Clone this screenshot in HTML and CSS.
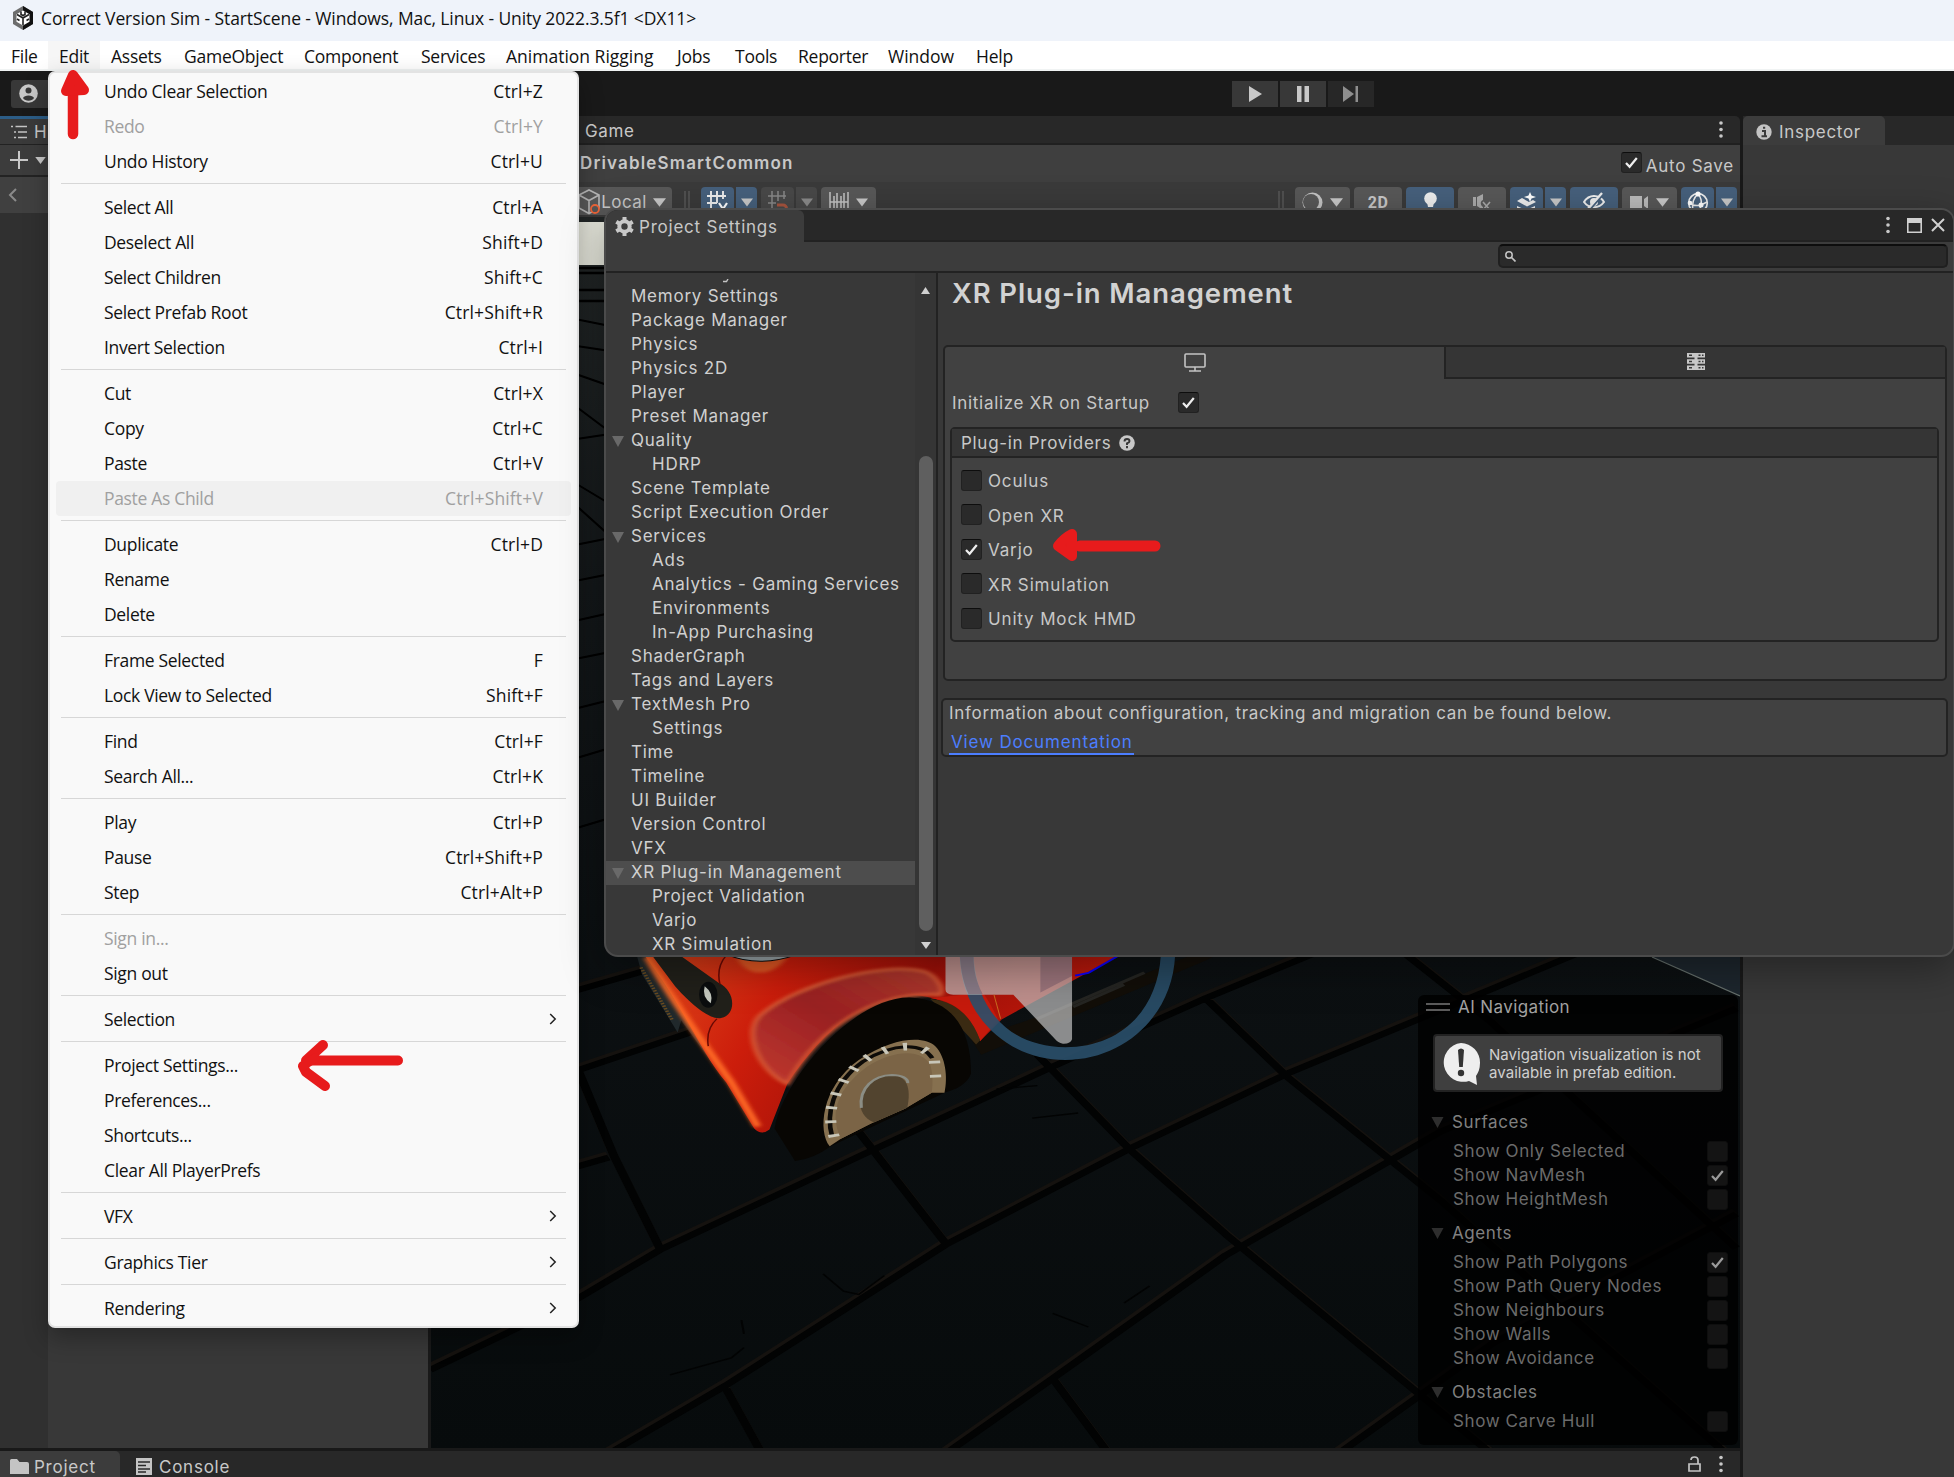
FILE: index.html
```html
<!DOCTYPE html>
<html lang="en">
<head>
<meta charset="utf-8">
<title>Correct Version Sim - StartScene</title>
<link rel="stylesheet" href="styles.css">
</head>
<body>
<svg width="0" height="0" class="defs">
  <symbol id="check" viewBox="0 0 21 21"><path d="M5 11l3.6 3.8L15.8 6" fill="none" stroke="currentColor" stroke-width="2.2"/></symbol>
  <symbol id="tri" viewBox="0 0 12 12"><path d="M0 1h12L6 12z" fill="currentColor"/></symbol>
  <symbol id="drop" viewBox="0 0 12 8"><path d="M0 0h12L6 8z" fill="currentColor"/></symbol>
  <symbol id="kebab" viewBox="0 0 4 18"><circle cx="2" cy="2.5" r="1.8"/><circle cx="2" cy="9" r="1.8"/><circle cx="2" cy="15.5" r="1.8"/></symbol>
  <symbol id="chev" viewBox="0 0 8 12"><path d="M1.2 1l5 5-5 5" fill="none" stroke="#222" stroke-width="1.5"/></symbol>
</svg>

<header class="titlebar">
  <svg class="logo" width="22" height="24" viewBox="0 0 22 24"><path d="M11 0l10 6v12l-10 6L1 18V6z" fill="#6d6d6d"/><path d="M11 0l10 6v12l-10 6z" fill="#111"/><path d="M11 4.500l6.500 3.800v7.400L11 19.500l-6.500-3.800V8.300z" fill="#fff"/><path d="M11 12v7M11 12L5 8.500M11 12l6-3.500M9 5.500v3l2 1 2-1v-3M5 13l2.500 1.500M17 13l-2.500 1.500" stroke="#222" stroke-width="1.600" fill="none"/></svg>
  <span>Correct Version Sim - StartScene - Windows, Mac, Linux - Unity 2022.3.5f1 &lt;DX11&gt;</span>
</header>
<nav class="menubar">
  <span style="width:48px">File</span><span class="open" style="width:52px">Edit</span><span style="width:73px">Assets</span><span style="width:120px">GameObject</span><span style="width:117px">Component</span><span style="width:85px">Services</span><span style="width:171px">Animation Rigging</span><span style="width:58px">Jobs</span><span style="width:63px">Tools</span><span style="width:90px">Reporter</span><span style="width:88px">Window</span><span style="width:60px">Help</span>
</nav>
<div class="maintools">
  <div class="account"><svg width="19" height="19" viewBox="0 0 19 19"><circle cx="9.500" cy="9.500" r="9.300" fill="#c8c8c8"/><circle cx="9.500" cy="6.500" r="3" fill="#383838"/><path d="M4 14c1-3.500 10-3.500 11 0-2 3.500-9 3.500-11 0z" fill="#383838"/></svg></div>
  <div class="playgroup">
    <div class="pb"><svg width="13" height="16"><path d="M0 0l13 8-13 8z" fill="#c8c8c8"/></svg></div>
    <div class="pb"><svg width="12" height="16"><path d="M0 0h4.500v16H0zM7.500 0H12v16H7.500z" fill="#c8c8c8"/></svg></div>
    <div class="pb off"><svg width="16" height="16"><path d="M0 0l11 8-11 8zM12.500 0H15v16h-2.500z" fill="#8e8e8e"/></svg></div>
  </div>
</div>

<div class="workspace">
  <div class="leftpart">
    <div class="panels">
      <section class="hier">
        <div class="hiertab"><svg width="17" height="14" viewBox="0 0 17 14"><path d="M0 1.500h2M4.500 1.500H16M3 7h2M7 7h9M3 12.500h2M7 12.500h9" stroke="#c4c4c4" stroke-width="1.700"/></svg><span>H</span></div>
        <div class="hiertools"><svg width="18" height="18"><path d="M9 0v18M0 9h18" stroke="#c8c8c8" stroke-width="2"/></svg><svg width="11" height="7" class="lt"><use href="#drop"/></svg></div>
        <div class="hierback"><svg width="9" height="14"><path d="M8 1L2 7l6 6" fill="none" stroke="#8a8a8a" stroke-width="2"/></svg></div>
        <div class="hierbody"><div class="gutter"></div><div class="tree"></div></div>
      </section>
      <section class="scene">
        <div class="scenetab"><span>Game</span><svg width="4" height="19" class="lt"><use href="#kebab"/></svg></div>
        <div class="scenehead"><b>DrivableSmartCommon</b><div class="autosave"><i class="cb"><svg width="21" height="21"><use href="#check"/></svg></i><span>Auto Save</span></div></div>
        <div class="scenetools">
          <div class="tb local"><svg width="22" height="26" viewBox="0 0 22 26"><path d="M1 6l10-5 10 5v13l-10 5.500L1 19zM1 6l10 5.500L21 6M11 11.500V24" fill="none" stroke="#b8b8b8" stroke-width="1.600"/><circle cx="17" cy="20" r="4" fill="#585858" stroke="#f2673a" stroke-width="1.800"/></svg><span>Local</span><svg width="13" height="9"><use href="#drop"/></svg></div>
          <div class="grip"></div>
          <div class="tb on w33"><svg width="22" height="22" viewBox="0 0 22 22"><path d="M0 5h19M0 12h10M0 19h9M4 0v22M10 0v12M16 0v8" stroke="#eee" stroke-width="1.900" fill="none"/><path d="M12 12l4 6 4-6M16 18v4" stroke="#fff" stroke-width="2.200" fill="none"/></svg></div><div class="tb on w21 j"><svg width="12" height="9"><use href="#drop"/></svg></div>
          <div class="tb dim w33"><svg width="20" height="22" viewBox="0 0 20 22"><path d="M0 5h18M0 12h8M0 19h6M4 0v22M10 0v10M16 0v8" stroke="#888" stroke-width="1.500" fill="none"/><path d="M9 14h6a3.500 3.500 0 010 7H9" stroke="#a8553f" stroke-width="3" fill="none"/></svg></div><div class="tb dim w21 j"><svg width="12" height="9"><use href="#drop"/></svg></div>
          <div class="tb w55"><svg width="20" height="20"><path d="M1 0v20M19 0v20M5 4v12M8 1v18M12 4v12M15 1v18M1 10h18" stroke="#c4c4c4" stroke-width="1.500"/></svg><svg width="12" height="9"><use href="#drop"/></svg></div>
          <div class="grip r"></div>
          <div class="tb w55"><svg width="21" height="21"><circle cx="10.500" cy="10.500" r="10" fill="#c4c4c4"/><circle cx="9" cy="10" r="8" fill="#585858"/></svg><svg width="13" height="9"><use href="#drop"/></svg></div>
          <div class="tb w48"><b class="two">2D</b></div>
          <div class="tb on w48"><svg width="13" height="21" viewBox="0 0 13 21"><circle cx="6.500" cy="6.500" r="6.300" fill="#eee"/><path d="M3 10h7l-1 5H4zM4 16h5v3H4z" fill="#eee"/></svg></div>
          <div class="tb w48"><svg width="18" height="17"><path d="M0 3h3v9H0zM4 3l6-3v6c-3 1-3 5 0 7v3l-6-4z" fill="#aaa"/><path d="M10 8l7 8M17 8l-7 8" stroke="#aaa" stroke-width="1.600"/></svg></div>
          <div class="tb on w33"><svg width="20" height="20" viewBox="0 0 20 20"><path d="M0 9l5-3 7 4 4-2 3 2-9 4.500zM0 14l9 4 9-4v2l-9 4-9-4z" fill="#eee"/><path d="M13 0l1.500 3.500L19 5l-4.500 1.500L13 10l-1.500-3.500L7 5l4.500-1.500z" fill="#fff"/></svg></div><div class="tb on w21 j"><svg width="12" height="9"><use href="#drop"/></svg></div>
          <div class="tb on w48"><svg width="22" height="20" viewBox="0 0 22 20"><path d="M1 10c5-8 15-8 20 0-5 7-15 7-20 0z" fill="none" stroke="#eee" stroke-width="2"/><circle cx="11" cy="10" r="4" fill="#eee"/><path d="M20.500 2L5.500 19" stroke="#46607c" stroke-width="2"/><path d="M19 1L4 18" stroke="#eee" stroke-width="2.300"/></svg></div>
          <div class="tb w55"><svg width="19" height="13"><path d="M0 0h12v13H0zM14 3l4-3v13l-4-3z" fill="#bbb"/></svg><svg width="13" height="9"><use href="#drop"/></svg></div>
          <div class="tb on w33"><svg width="22" height="23" viewBox="0 0 22 23"><circle cx="11" cy="12" r="9.300" fill="none" stroke="#eee" stroke-width="1.700"/><path d="M11 3C6 7 5 14 6 20M11 3c3 3 4 8 3 11M2 12c4 3 8 3 12 2l6-3M14 14l-2 7" fill="none" stroke="#eee" stroke-width="1.500"/><circle cx="11" cy="3" r="2.600" fill="#fff"/><circle cx="3" cy="12" r="2.300" fill="#fff"/><circle cx="14" cy="14" r="2.500" fill="#fff"/></svg></div><div class="tb on w21 j last"><svg width="12" height="9"><use href="#drop"/></svg></div>
        </div>
        <div class="view">
          <svg class="render" width="1309" height="1231" viewBox="431 217 1309 1231">
            <defs>
              <linearGradient id="road" x1="0" y1="0" x2="0" y2="1"><stop offset="0" stop-color="#232727"/><stop offset=".3" stop-color="#14181a"/><stop offset=".6" stop-color="#0c1012"/><stop offset="1" stop-color="#070b0c"/></linearGradient>
              <linearGradient id="body" x1="0" y1="0" x2="1" y2=".2"><stop offset="0" stop-color="#e04a1c"/><stop offset=".3" stop-color="#cc1d0b"/><stop offset=".6" stop-color="#a01008"/><stop offset="1" stop-color="#c01a0c"/></linearGradient>
              <linearGradient id="arch" x1="0" y1="1" x2="1" y2="0"><stop offset="0" stop-color="#c23a30"/><stop offset=".5" stop-color="#992022"/><stop offset="1" stop-color="#b03a2c"/></linearGradient>
              <filter id="soft"><feGaussianBlur stdDeviation="5"/></filter>
              <path id="joints" d="M300 150L440 90M300 385L520 275 560 250M310 380L380 630 470 900M300 665L370 635M20 1255L300 1055 470 905 870 625 1240 370 1540 170 1800 10M860 560L1030 885M370 1500L600 1300 1030 890 1390 610 1700 390 2300 20M1210 335L1390 610 1580 860 2100 1500M600 1310L670 1500M1030 1500L1240 1280 1580 920 2000 560 2580 200M1240 1280L1350 1500M1540 170L1700 400 2000 760 2560 1500M1880 -20L2100 240 2580 900M1800 1500L2100 1180 2580 800"/>
            </defs>
            <rect x="431" y="217" width="1309" height="1231" fill="url(#road)"/>
            <path d="M570 222h40v43h-40z" fill="#e8e9de"/>
            <path d="M570 268h40M570 273h40M570 290h40M570 301h40" stroke="#000" stroke-width="2.500"/>
            <path d="M570 318l40 8M570 345l40 6M570 372l40 14M570 402l40 30M570 440l40-6M570 480l40 24M570 500l40 36M570 546l40-8M570 582l40-8M570 622l40-9M570 660l40-8M570 710l40-10M570 830l40-12M570 760l40-12" stroke="#000" stroke-width="2"/>
            <g transform="translate(420 940) scale(.5102 .3425)">
              <g fill="none" stroke-linejoin="round">
                <use href="#joints" stroke="#15120f" stroke-width="17" transform="translate(-3 -9)"/>
                <use href="#joints" stroke="#020303" stroke-width="17"/>
              </g>
              <path d="M490 1270L610 1220 635 1190M790 975L830 1025 860 1035 910 980M1240 1090L1310 1130M1380 1060L1430 1010M1130 435L1210 425M1200 520L1290 505M630 1110L635 1150" fill="none" stroke="#020303" stroke-width="4"/>
              <path d="M1190 235L1510 45 1560 45 1540 60 1100 335 1080 290z" fill="#120e08"/>
              <path d="M1210 230L1420 95M1280 195L1380 130" stroke="#252522" stroke-width="8"/>
              <path d="M425 45L435 100 505 270 512 235 600 415 560 300 510 180 460 45z" fill="#20282b"/>
              <path d="M433 80L495 235" stroke="#6b4c20" stroke-width="7" stroke-dasharray="4 4"/>
              <path d="M440 45C520 200 550 330 600 415L655 550Q669 572 685 553L720 420C790 260 880 155 960 160 1040 165 1080 230 1098 295L1140 232 1370 45z" fill="url(#body)"/>
              <path d="M445 50C500 190 560 310 610 415L662 545" fill="none" stroke="#ff6a28" stroke-width="14" filter="url(#soft)"/>
              <path d="M720 420C660 380 630 260 670 215 740 130 900 65 985 90 1010 100 1030 140 1020 160 900 150 790 240 720 420z" fill="url(#arch)" stroke="#d85a35" stroke-width="8" filter="url(#soft)"/>
              <path d="M620 50c20 60 70 60 100 0z" fill="#e05724" filter="url(#soft)"/>
              <path d="M600 42Q665 82 740 42z" fill="#9aa6aa" stroke="#0a0a0a" stroke-width="3"/>
              <path d="M455 45L510 45 585 125C620 150 620 220 590 228 565 235 520 170 500 135z" fill="#21201a"/>
              <ellipse cx="565" cy="160" rx="18" ry="38" fill="#0b0d0e"/><path d="M558 135q18 20 12 50-18-20-12-50z" fill="#c5c9c0"/>
              <path d="M600 45Q580 80 588 130M582 230Q560 260 565 310" fill="none" stroke="#690904" stroke-width="3"/>
              <path d="M1000 170q70 10 98 125l35-62q-15-50-30-80" fill="#c61a0c"/>
              <path d="M1000 172Q1070 180 1098 293L1090 305 1050 240z" fill="#3a2a12"/>
              <path d="M735 645L695 550C710 410 850 165 960 168 1050 175 1080 270 1080 390 1070 430 1040 440 1028 446L805 602Q770 640 735 645z" fill="#080603"/>
              <path d="M803 602C780 560 785 430 860 350 930 280 990 280 1010 310 1030 340 1035 400 1028 446L1003 446 950 493 885 535 825 580z" fill="#86704f"/>
              <path d="M808 575C795 510 808 420 868 355 930 298 985 300 1004 345" fill="none" stroke="#0d0b08" stroke-width="9"/>
              <path d="M825 580C800 500 822 430 876 370 930 318 985 318 1000 365 1008 400 1003 446 1003 446L950 493 885 535z" fill="#7b6446"/>
              <path d="M812 575C795 510 806 430 868 352 930 298 985 300 1008 345L1012 430" fill="none" stroke="#c8c6b8" stroke-width="22" stroke-dasharray="8 33"/>
              <path d="M890 533C850 510 855 430 900 400 950 380 965 420 955 490z" fill="#52442f"/>
              <path d="M865 490C860 430 890 395 925 394 945 394 957 405 956 418" fill="none" stroke="#8b8d84" stroke-width="6"/>
              <path d="M1058 45C1060 220 1150 350 1265 350S1475 220 1480 45L1452 45C1445 210 1370 313 1265 313S1090 210 1085 45z" fill="#2a506c" fill-opacity=".9"/>
              <path d="M1030 45H1278V290Q1275 304 1260 303 1250 300 1245 290L1163 160H1045Q1030 158 1030 145z" fill="#c2c2c2" fill-opacity=".7"/>
              <path d="M1058 45C1060 90 1065 125 1075 158H1103C1090 120 1085 90 1085 45zM1216 45h62v60l-62 48z" fill="#7c5d6e" fill-opacity=".55"/>
              <path d="M1284 104L1310 96 1370 45" fill="none" stroke="#0a00ff" stroke-width="5"/>
              <path d="M1125 160L1138 230" stroke="#c96b20" stroke-width="2"/>
            </g>
            <path d="M1652 957h88v39z" fill="#1d262d"/><path d="M1652 957l88 39" stroke="#66706c" stroke-width="1.200"/>
          </svg>
          <aside class="ainav">
            <div class="aititle"><i class="bars"></i><span>AI Navigation</span></div>
            <div class="notice"><svg width="41" height="44" viewBox="0 0 41 44"><path d="M20 1a19.500 19.500 0 0119 20c0 6-2 10-4 13l1 9-8-4A19.500 19.500 0 1120 1z" fill="#eee"/><path d="M17 8q3-3 6 0l-1.200 17h-3.600z" fill="#333"/><circle cx="20" cy="31" r="3.200" fill="#333"/></svg><p>Navigation visualization is not<br>available in prefab edition.</p></div>
            <h4><svg width="13" height="12"><use href="#tri"/></svg>Surfaces</h4>
            <div class="opt">Show Only Selected<i class="cb"></i></div>
            <div class="opt">Show NavMesh<i class="cb"><svg width="21" height="21"><use href="#check"/></svg></i></div>
            <div class="opt">Show HeightMesh<i class="cb"></i></div>
            <h4><svg width="13" height="12"><use href="#tri"/></svg>Agents</h4>
            <div class="opt">Show Path Polygons<i class="cb"><svg width="21" height="21"><use href="#check"/></svg></i></div>
            <div class="opt">Show Path Query Nodes<i class="cb"></i></div>
            <div class="opt">Show Neighbours<i class="cb"></i></div>
            <div class="opt">Show Walls<i class="cb"></i></div>
            <div class="opt">Show Avoidance<i class="cb"></i></div>
            <h4><svg width="13" height="12"><use href="#tri"/></svg>Obstacles</h4>
            <div class="opt">Show Carve Hull<i class="cb"></i></div>
          </aside>
        </div>
      </section>
    </div>
    <footer class="bottom">
      <div class="btab active"><svg width="19" height="15"><path d="M0 1.500Q0 0 1.500 0H7l2.500 3H17q2 0 2 2v10H0z" fill="#c4c4c4"/></svg><span>Project</span></div>
      <div class="btab"><svg width="16" height="17"><path d="M0 0h16v17H0z" fill="#c4c4c4"/><path d="M2 4h12M2 7.500h8M2 11h12M2 14h8" stroke="#282828" stroke-width="1.500"/></svg><span>Console</span></div>
      <svg class="lock" width="13" height="16"><path d="M1 8h11v7H1zM3 4q0-3 3.500-3T10 4v4" fill="none" stroke="#c4c4c4" stroke-width="1.700"/></svg>
      <svg width="4" height="18" class="lt bk"><use href="#kebab"/></svg>
    </footer>
  </div>
  <section class="inspector">
    <div class="instabs"><div class="instab"><svg width="16" height="16"><circle cx="8" cy="8" r="7.700" fill="#c4c4c4"/><path d="M6 7h3v5M5.500 12.200h5.500M7 3.700h2.200" stroke="#3c3c3c" stroke-width="2" fill="none"/></svg><span>Inspector</span></div></div>
  </section>
</div>

<div class="menu">
  <div class="mi">Undo Clear Selection<span>Ctrl+Z</span></div>
  <div class="mi gray">Redo<span>Ctrl+Y</span></div>
  <div class="mi">Undo History<span>Ctrl+U</span></div>
  <hr>
  <div class="mi">Select All<span>Ctrl+A</span></div>
  <div class="mi">Deselect All<span>Shift+D</span></div>
  <div class="mi">Select Children<span>Shift+C</span></div>
  <div class="mi">Select Prefab Root<span>Ctrl+Shift+R</span></div>
  <div class="mi">Invert Selection<span>Ctrl+I</span></div>
  <hr>
  <div class="mi">Cut<span>Ctrl+X</span></div>
  <div class="mi">Copy<span>Ctrl+C</span></div>
  <div class="mi">Paste<span>Ctrl+V</span></div>
  <div class="mi gray hover">Paste As Child<span>Ctrl+Shift+V</span></div>
  <hr>
  <div class="mi">Duplicate<span>Ctrl+D</span></div>
  <div class="mi">Rename</div>
  <div class="mi">Delete</div>
  <hr>
  <div class="mi">Frame Selected<span>F</span></div>
  <div class="mi">Lock View to Selected<span>Shift+F</span></div>
  <hr>
  <div class="mi">Find<span>Ctrl+F</span></div>
  <div class="mi">Search All...<span>Ctrl+K</span></div>
  <hr>
  <div class="mi">Play<span>Ctrl+P</span></div>
  <div class="mi">Pause<span>Ctrl+Shift+P</span></div>
  <div class="mi">Step<span>Ctrl+Alt+P</span></div>
  <hr>
  <div class="mi gray">Sign in...</div>
  <div class="mi">Sign out</div>
  <hr>
  <div class="mi sub">Selection<svg width="8" height="12"><use href="#chev"/></svg></div>
  <hr>
  <div class="mi">Project Settings...</div>
  <div class="mi">Preferences...</div>
  <div class="mi">Shortcuts...</div>
  <div class="mi">Clear All PlayerPrefs</div>
  <hr>
  <div class="mi sub">VFX<svg width="8" height="12"><use href="#chev"/></svg></div>
  <hr>
  <div class="mi sub">Graphics Tier<svg width="8" height="12"><use href="#chev"/></svg></div>
  <hr>
  <div class="mi sub">Rendering<svg width="8" height="12"><use href="#chev"/></svg></div>
</div>

<div class="window">
  <div class="wintabs">
    <div class="wintab"><svg width="19" height="19" viewBox="0 0 19 19"><circle cx="9.500" cy="9.500" r="5.200" fill="none" stroke="#c8c8c8" stroke-width="4"/><path d="M9.500 0v4M9.500 15v4M1.300 4.800l3.400 2M14.300 12.200l3.400 2M1.300 14.200l3.400-2M14.300 6.800l3.400-2" stroke="#c8c8c8" stroke-width="4"/></svg><span>Project Settings</span></div>
    <svg width="4" height="18" class="lt wk"><use href="#kebab"/></svg>
    <svg width="15" height="15" class="wmax"><path d="M.8.8h13.400v13.400H.8z" fill="none" stroke="#d0d0d0" stroke-width="1.600"/><path d="M0 0h15v5H0z" fill="#d0d0d0"/></svg>
    <svg width="14" height="14" class="wx"><path d="M1 1l12 12M13 1L1 13" stroke="#d0d0d0" stroke-width="2"/></svg>
  </div>
  <div class="wintools"><div class="search"><svg width="11" height="11"><circle cx="4" cy="4" r="3.200" fill="none" stroke="#c4c4c4" stroke-width="1.500"/><path d="M6.500 6.500l4 4" stroke="#c4c4c4" stroke-width="1.700"/></svg></div></div>
  <div class="winbody">
    <div class="cats">
      <svg class="clip" width="8" height="4"><path d="M5 0L3.500 2.500H0" fill="none" stroke="#c4c4c4" stroke-width="1.400"/></svg>
      <div>Memory Settings</div><div>Package Manager</div><div>Physics</div><div>Physics 2D</div><div>Player</div><div>Preset Manager</div>
      <div class="fold"><svg width="12" height="12"><use href="#tri"/></svg>Quality</div><div class="l2">HDRP</div>
      <div>Scene Template</div><div>Script Execution Order</div>
      <div class="fold"><svg width="12" height="12"><use href="#tri"/></svg>Services</div><div class="l2">Ads</div><div class="l2">Analytics - Gaming Services</div><div class="l2">Environments</div><div class="l2">In-App Purchasing</div>
      <div>ShaderGraph</div><div>Tags and Layers</div>
      <div class="fold"><svg width="12" height="12"><use href="#tri"/></svg>TextMesh Pro</div><div class="l2">Settings</div>
      <div>Time</div><div>Timeline</div><div>UI Builder</div><div>Version Control</div><div>VFX</div>
      <div class="fold sel"><svg width="12" height="12"><use href="#tri"/></svg>XR Plug-in Management</div><div class="l2">Project Validation</div><div class="l2">Varjo</div><div class="l2">XR Simulation</div>
    </div>
    <div class="scroll"><svg width="9" height="7"><path d="M4.500 0L9 7H0z" fill="#d0d0d0"/></svg><i></i><svg width="10" height="7"><path d="M5 7L10 0H0z" fill="#d0d0d0"/></svg></div>
    <div class="content">
      <h1>XR Plug-in Management</h1>
      <div class="tabbox">
        <div class="ptabs">
          <div class="ptab"><svg width="22" height="19"><rect x="1" y="1" width="20" height="13" rx="1" fill="none" stroke="#c4c4c4" stroke-width="1.600"/><path d="M11 14v4M5 18h12" stroke="#c4c4c4" stroke-width="1.600"/></svg></div>
          <div class="ptab off"><svg width="18" height="17"><path d="M0 0h18v4.500H0zM0 6.200h18v4.500H0zM0 12.400h18V17H0zM7.500 4h3v9h-3z" fill="#c8c8c8"/><path d="M2 2.200h3M11.500 2.200h2M15 2.200h1.500M2 8.400h3M11.500 8.400h2M15 8.400h1.500M2 14.700h3M11.500 14.700h2M15 14.700h1.500" stroke="#383838" stroke-width="1.500"/></svg></div>
        </div>
        <div class="init"><span>Initialize XR on Startup</span><i class="cb"><svg width="21" height="21"><use href="#check"/></svg></i></div>
        <div class="providers">
          <div class="phead"><span>Plug-in Providers</span><svg width="16" height="16"><circle cx="8" cy="8" r="7.800" fill="#c8c8c8"/><path d="M5.500 6.500Q5.500 4 8 4t2.500 2.200Q10.500 7.500 8 8.300V10M8 11v2.200" fill="none" stroke="#353535" stroke-width="1.900"/></svg></div>
          <div class="prov"><i class="cb"></i>Oculus</div>
          <div class="prov"><i class="cb"></i>Open XR</div>
          <div class="prov"><i class="cb"><svg width="21" height="21"><use href="#check"/></svg></i>Varjo</div>
          <div class="prov"><i class="cb"></i>XR Simulation</div>
          <div class="prov"><i class="cb"></i>Unity Mock HMD</div>
        </div>
      </div>
      <div class="info"><p>Information about configuration, tracking and migration can be found below.</p><a>View Documentation</a></div>
    </div>
  </div>
</div>

<svg class="marks" width="1954" height="1477" fill="none" stroke="#e71b1c" stroke-linecap="round" stroke-linejoin="round">
  <path d="M73 134V90" stroke-width="10.500"/><path d="M73 75L66 91 84 90z" fill="#e71b1c" stroke-width="10"/>
  <path d="M398 1060.500H306L323 1045M303 1066L306 1072 325 1086" stroke-width="10"/><path d="M303 1066l12-8" stroke-width="9"/>
  <path d="M1155 546H1080" stroke-width="11"/><path d="M1072 534Q1064 538 1058 546L1072 556z" fill="#e71b1c" stroke-width="10"/>
</svg>
</body>
</html>
```

FILE: styles.css
```css
*{box-sizing:border-box}
body{margin:0;width:1954px;height:1477px;overflow:hidden;position:relative;display:flex;flex-direction:column;background:#191919;font:17px Inter,"Noto Sans",sans-serif;letter-spacing:.6px;color:#c8c8c8;white-space:nowrap}
.defs{position:absolute}
svg{flex:none;display:block}
p,h1,h4{margin:0;font-weight:400}
i{font-style:normal}
.lt{fill:#c8c8c8;color:#c8c8c8}

.titlebar{height:41px;background:#eff3fa;display:flex;align-items:center;gap:7px;padding:0 0 5px 12px;color:#111;font:17.5px "Open Sans",sans-serif;letter-spacing:-.1px}
.menubar{height:30px;background:#fff;border-bottom:2px solid #f0f3f3;display:flex;color:#111;font:17.5px/30px "Open Sans",sans-serif;letter-spacing:-.25px}
.menubar span{padding-left:11px}
.menubar span:nth-child(7),.menubar span:nth-child(11){letter-spacing:0}
.menubar .open{background:#f6f6f6}
.maintools{height:45px;background:#191919;display:flex;align-items:center;padding:0 0 0 11px}
.account{width:60px;height:28px;background:#383838;display:flex;align-items:center;padding-left:8px;border-radius:3px}
.playgroup{display:flex;gap:2px;margin-left:1161px}
.pb{width:46px;height:26px;background:#383838;display:flex;align-items:center;justify-content:center}
.pb.off{background:#272727}

.workspace{flex:1;display:flex;gap:3px;min-height:0}
.leftpart{width:1740px;display:flex;flex-direction:column}
.panels{flex:1;display:flex;gap:3px;min-height:0}
.hier{width:428px;display:flex;flex-direction:column;background:#383838}
.hiertab{height:29px;background:#3a3a3a;border-top:3px solid #2c5d87;border-bottom:1px solid #222;display:flex;align-items:center;gap:6px;padding-left:11px}
.hiertools{height:32px;background:#3c3c3c;border-bottom:2px solid #232323;display:flex;align-items:center;gap:7px;padding-left:10px}
.hierback{height:36px;background:#404040;display:flex;align-items:center;padding-left:8px}
.hierbody{flex:1;display:flex}
.gutter{width:48px;background:#303030}
.tree{flex:1;background:#383838}

.scene{flex:1;display:flex;flex-direction:column;min-width:0}
.scenetab{height:29px;background:#282828;border-bottom:2px solid #202020;border-radius:0 5px 0 0;display:flex;align-items:center;justify-content:space-between;padding:0 17px 0 154px}
.scenetab span{padding-top:3px}
.scenehead{height:37px;background:#3f3f3f;display:flex;justify-content:space-between;padding:0 6px 0 149px}
.scenehead b{font-weight:600;line-height:36px;letter-spacing:1.15px}
.autosave{display:flex;gap:4px;padding-top:8px;line-height:26px;letter-spacing:.75px}
.autosave .cb{margin-top:-1px}
.scenetools{height:35px;background:#3a3a3a;display:flex;align-items:flex-start;gap:4px;padding:5px 3px 0 141px}
.tb{height:28px;background:#585858;border-radius:4px;display:flex;align-items:center;justify-content:center;gap:7px;padding-top:2px;color:#c8c8c8;letter-spacing:.4px}
.tb.local{width:100px;gap:1px}
.tb.local svg:last-child{margin-left:5px}
.tb.on{background:#46607c}
.tb.dim{background:#484848;color:#8a8a8a}
.tb.j{margin-left:-2px;border-radius:0 4px 4px 0}
.w33{width:33px}.w21{width:21px}.w55{width:55px}.w48{width:48px}
.two{font:700 16px Roboto,sans-serif}
.grip{width:6px;height:24px;border:solid #505050;border-width:0 2px;margin:4px 7px 0 8px}
.grip.r{margin-left:auto}
.view{flex:1;position:relative;min-height:0;overflow:hidden}

.cb{width:21px;height:21px;background:#2a2a2a;border:1px solid #212121;border-top-color:#0d0d0d;border-radius:3px;display:block;flex:none;color:#eee}
.cb svg{margin:-1px}

.ainav{position:absolute;left:987px;top:778px;width:320px;height:450px;background:rgba(0,0,0,.8);border-radius:6px;padding:0 10px 0 13px;color:#6b6b6b}
.aititle{display:flex;align-items:center;height:24px;gap:8px;margin-left:-5px;color:#a2a2a2;letter-spacing:.4px}
.bars{width:24px;height:8px;border:solid #5c5c5c;border-width:2px 0}
.notice{width:290px;height:58px;margin:15px 0 16px 2px;background:#3f3f3f;border:2px solid #222;border-radius:4px;display:flex;gap:7px;padding:6px;color:#d0d0d0;font-size:15px;line-height:18px;letter-spacing:.05px}
.notice p{padding-top:4px}
.ainav h4{display:flex;align-items:center;gap:8px;height:28px;color:#808080}
.ainav h4 svg{color:#2e2e2e}
.opt{display:flex;justify-content:space-between;align-items:center;height:24px;padding-left:22px}
.opt .cb{background:#141414;border-color:#0e0e0e;color:#9a9a9a}
.notice + h4{margin-bottom:3px}
.opt + h4{margin:8px 0 3px}

.bottom{height:29px;background:#282828;border-top:3px solid #191919;display:flex;align-items:center}
.btab{height:26px;display:flex;align-items:center;gap:5px;padding-left:10px;width:120px;padding-top:5px;letter-spacing:.75px}
.btab.active{background:#3c3c3c;border-radius:0 5px 0 0}
.btab + .btab{padding-left:16px;gap:7px}
.lock{margin-left:auto}
.bk{margin:0 17px 0 18px}

.inspector{flex:1;background:#383838}
.instabs{height:29px;background:#282828}
.instab{width:142px;height:29px;background:#3c3c3c;border-radius:5px 5px 0 0;display:flex;align-items:center;gap:7px;padding:2px 0 0 13px;letter-spacing:.7px}

.menu{position:absolute;left:48px;top:71px;width:531px;height:1257px;background:#f9f9f9;border:2px solid #e3e3e3;border-radius:7px;padding:1px 6px;box-shadow:0 10px 24px rgba(0,0,0,.3);color:#111;font:17.5px "Open Sans",sans-serif;letter-spacing:-.33px}
.mi{height:35px;display:flex;align-items:center;justify-content:space-between;padding:0 28px 2px 48px;border-radius:4px}
.mi span{letter-spacing:.15px}
.mi.sub{padding-right:14px}
.mi.gray{color:#a0a0a0}
.mi.hover{background:#f0f0f0}
.menu hr{height:11px;margin:0 5px;border:0;background:linear-gradient(#d7d7d7,#d7d7d7) 0 4px/100% 1px no-repeat}

.window{position:absolute;left:604px;top:208px;width:1351px;height:749px;background:#383838;border:2px solid #4b4b4b;border-radius:14px;overflow:hidden;display:flex;flex-direction:column;box-shadow:0 12px 40px rgba(0,0,0,.35)}
.wintabs{height:32px;background:#282828;border-bottom:2px solid #222;display:flex;align-items:center}
.wintab{width:198px;height:32px;margin-top:2px;background:#3c3c3c;border-radius:6px 6px 0 0;display:flex;align-items:center;gap:5px;padding:1px 0 0 9px;letter-spacing:.78px}
.wk{margin:0 17px 0 auto}
.wx{margin:0 8px 0 9px}
.wintools{height:31px;background:#3c3c3c;border-bottom:2px solid #222;padding:2px 5px;display:flex;justify-content:flex-end}
.search{width:450px;height:24px;background:#2a2a2a;border:2px solid #202020;border-top-color:#0d0d0d;border-radius:5px;padding:5px}
.winbody{flex:1;display:flex;min-height:0}
.cats{width:309px;padding-top:6px;overflow:hidden;color:#d0d0d0;letter-spacing:.76px}
.clip{margin-left:117px;height:6px}
.cats div{height:24px;line-height:23px;padding-left:25px;display:flex}
.cats .l2{padding-left:46px}
.cats .fold{padding-left:6px;gap:7px}
.cats .fold svg{color:#696969;margin-top:6px}
.cats .sel{background:#4d4d4d}
.scroll{width:23px;background:#353535;border-right:2px solid #222;display:flex;flex-direction:column;align-items:center;padding:14px 0 6px}
.scroll i{width:14px;height:475px;border-radius:7px;background:#5f5f5f;margin:auto 0 11px}
.content{flex:1;padding-left:5px;letter-spacing:.7px}
h1{font-size:27.500px;font-weight:600;line-height:36px;letter-spacing:.9px;margin:2px 0 34px 9px;color:#d2d2d2}
.tabbox{width:1004px;height:336px;border:2px solid #232323;border-radius:5px;background:#414141}
.ptabs{display:flex;height:32px}
.ptab{flex:1;display:flex;justify-content:center;padding-top:6px}
.ptab.off{background:#353535;border:solid #232323;border-width:0 0 2px 2px}
.init{display:flex;align-items:center;padding:13px 0 0 7px}
.init span{width:226px}
.providers{width:989px;height:215px;margin:14px 0 0 5px;border:2px solid #232323;border-radius:5px}
.phead{height:29px;background:#353535;border-bottom:2px solid #232323;display:flex;align-items:center;gap:8px;padding-left:9px;margin-bottom:6px}
.prov{height:34.500px;display:flex;align-items:center;gap:6px;padding-left:9px;letter-spacing:.85px}
.prov .cb{margin-top:-2px}
.info{width:1007px;height:59px;margin:17px 0 0 -2px;border:2px solid #232323;border-radius:5px;background:#414141;padding:2px 6px;line-height:22px}
.info a{display:inline-block;color:#4c7eff;border-bottom:2px solid #4c7eff;line-height:21px;margin:8px 0 0 0;padding:0 1px 0 2px;letter-spacing:.85px}
.marks{position:absolute;left:0;top:0}
```
